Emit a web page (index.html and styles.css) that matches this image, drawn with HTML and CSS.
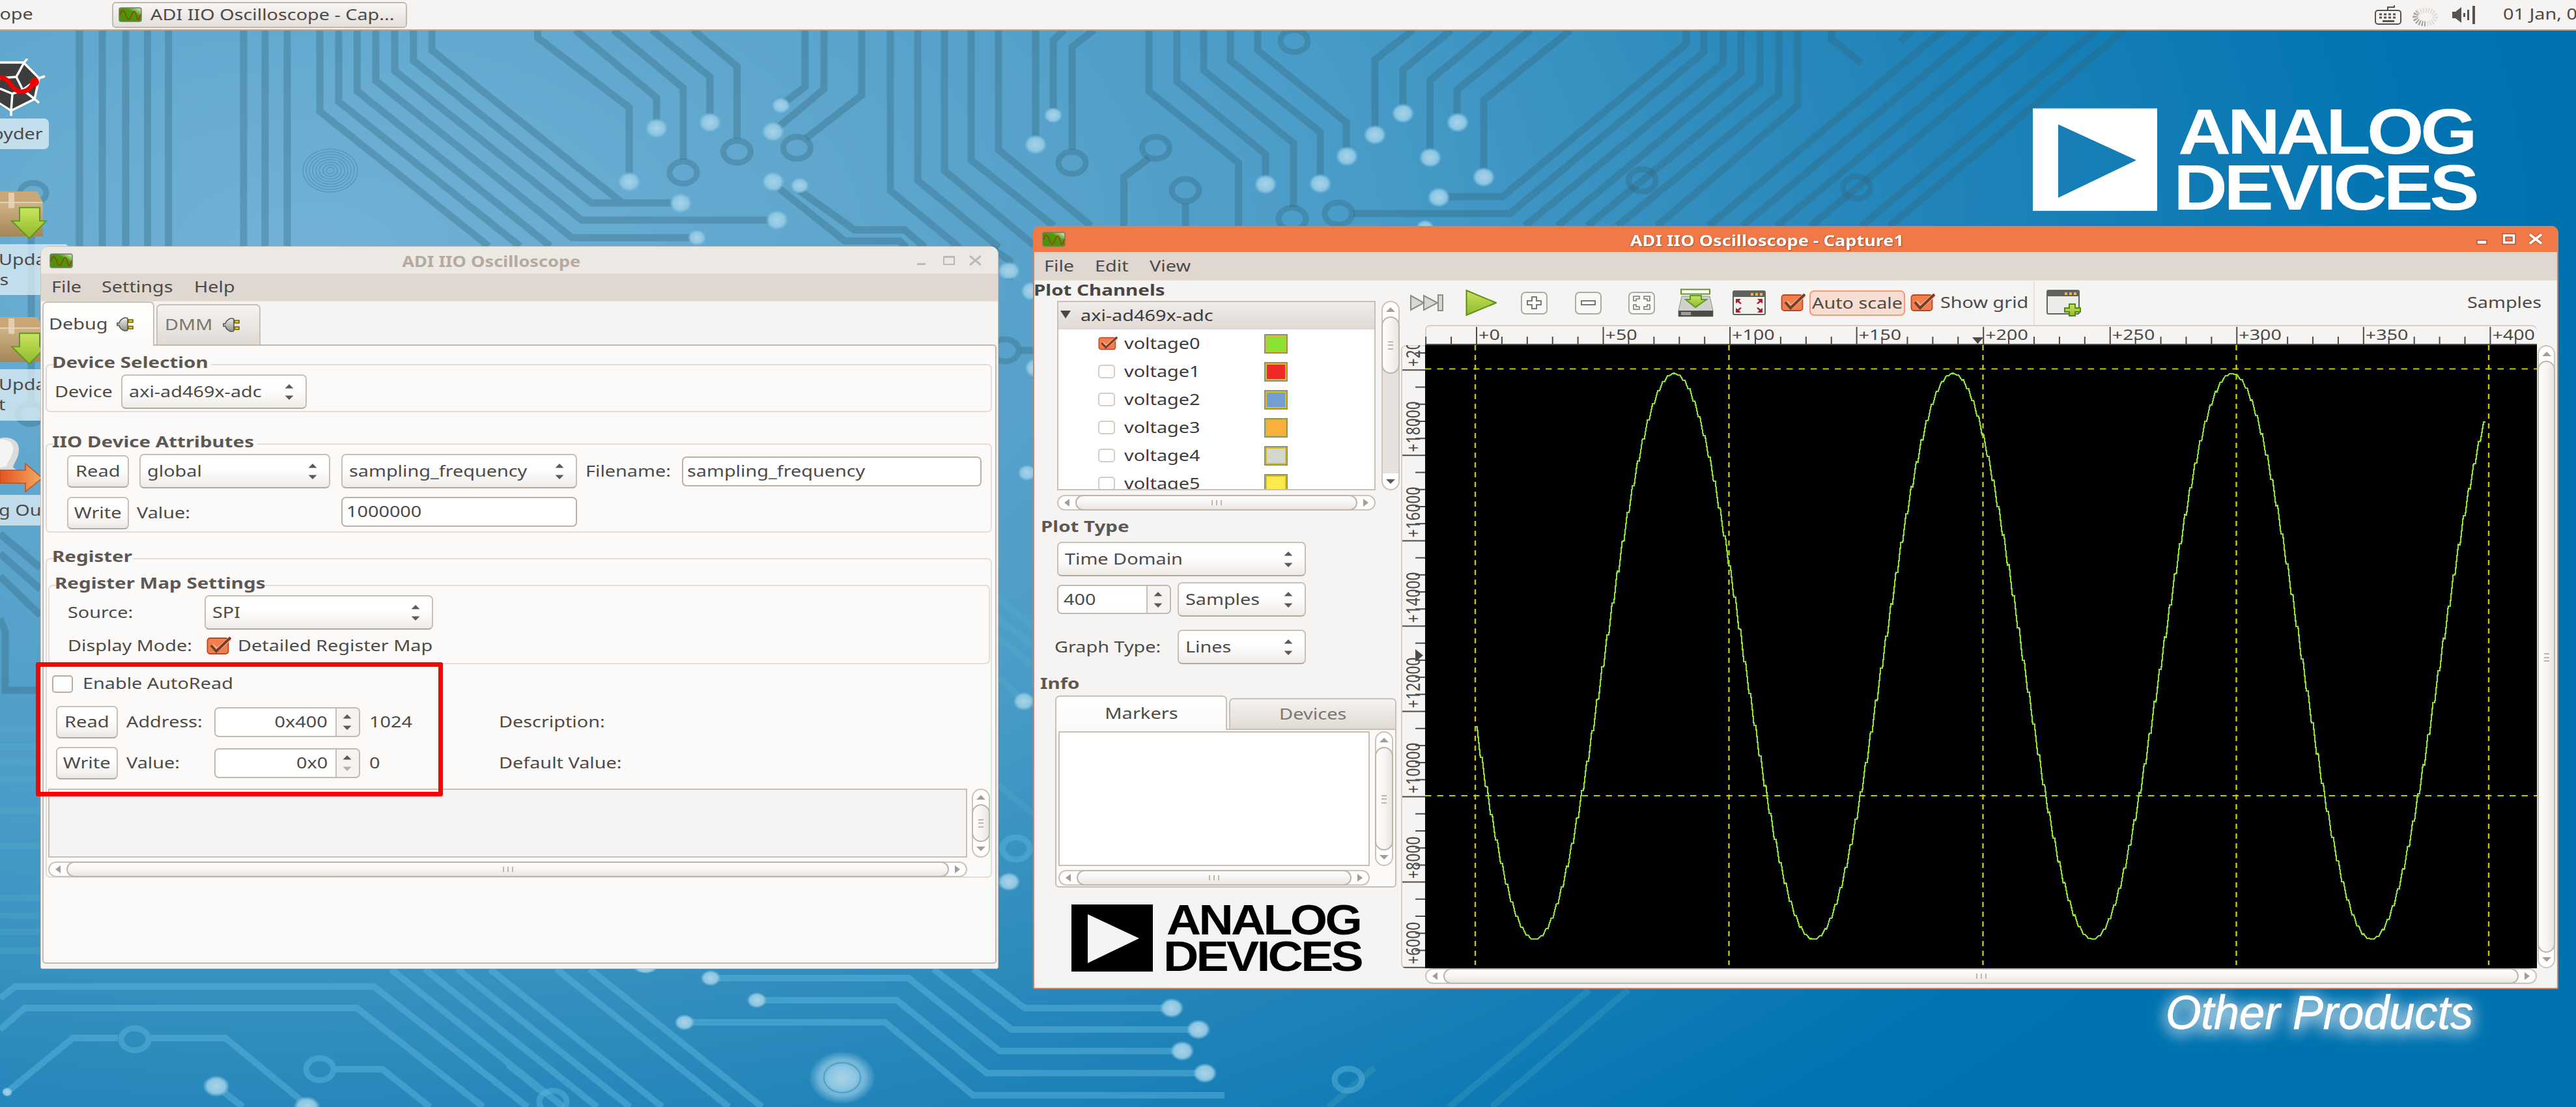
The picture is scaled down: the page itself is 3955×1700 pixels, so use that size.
FILE: index.html
```html
<!DOCTYPE html>
<html lang="en">
<head>
<meta charset="utf-8">
<title>ADI IIO Oscilloscope</title>
<link rel="stylesheet" href="styles.css">
</head>
<body>
<svg class="defs" width="0" height="0">
  <defs>
    <linearGradient id="gGreen" x1="0" y1="0" x2="0" y2="1"><stop offset="0" stop-color="#c9e45c"/><stop offset="1" stop-color="#8fb92f"/></linearGradient>
    <linearGradient id="gApp" x1="1" y1="0" x2="0" y2="1"><stop offset="0" stop-color="#e8f3e0"/><stop offset=".35" stop-color="#4e9a06"/><stop offset="1" stop-color="#4a8f08"/></linearGradient>
    <linearGradient id="gGrey" x1="0" y1="0" x2="0" y2="1"><stop offset="0" stop-color="#eeeeec"/><stop offset="1" stop-color="#8f918c"/></linearGradient>
    <linearGradient id="gBox" x1="0" y1="0" x2="0" y2="1"><stop offset="0" stop-color="#dcc298"/><stop offset="1" stop-color="#a58556"/></linearGradient>
    <linearGradient id="gExit" x1="0" y1="0" x2="1" y2="0"><stop offset="0" stop-color="#e2551f"/><stop offset="1" stop-color="#f4ab66"/></linearGradient>
    <radialGradient id="gNode"><stop offset="0" stop-color="#a9d3e8"/><stop offset=".7" stop-color="#8cc6e2"/><stop offset="1" stop-color="#7fc0e0" stop-opacity=".1"/></radialGradient>
  </defs>
  <symbol id="app" viewBox="0 0 36 23" preserveAspectRatio="none"><rect x="1" y="1" width="34" height="21" rx="3" fill="url(#gApp)" stroke="#6f7f66" stroke-width="1.5"/><path d="M2 12C5 3 8 3 11 12S17 21 20 12 26 6 28 15 32 18 34 11" fill="none" stroke="#8f4a10" stroke-width="1.8"/></symbol>
  <symbol id="plug" viewBox="0 0 28 24" preserveAspectRatio="none"><path d="M12 2H15Q17 2 17 4V20Q17 22 15 22H12Q5 19 4 14H1V10H4Q5 5 12 2Z" fill="url(#gGrey)" stroke="#555753" stroke-width="1.6"/><path d="M18 5H25V9H18ZM18 15H25V19H18Z" fill="#edd400" stroke="#6e5c00" stroke-width="1.6"/></symbol>
  <symbol id="check" viewBox="0 0 38 28" preserveAspectRatio="none"><rect x="1.5" y="2" width="32" height="24" rx="4" fill="#f47d4d" stroke="#b34a24" stroke-width="1.8"/><path d="M8 13L16 20 37 2" fill="none" stroke="#ffb08e" stroke-width="6"/><path d="M7 13L15 22 37 1" fill="none" stroke="#713f2b" stroke-width="4"/></symbol>
  <symbol id="updown" viewBox="0 0 14 26"><path d="M0 7L7 0 14 7ZM0 19L7 26 14 19Z" fill="#5b5855"/></symbol>
  <symbol id="updim" viewBox="0 0 14 26"><path d="M0 7L7 0 14 7Z" fill="#5b5855"/><path d="M0 19L7 26 14 19Z" fill="#b3afab"/></symbol>
  <symbol id="al" viewBox="0 0 8 12"><path d="M8 0V12L0 6Z" fill="#a39e99"/></symbol>
  <symbol id="ar" viewBox="0 0 8 12"><path d="M0 0V12L8 6Z" fill="#a39e99"/></symbol>
  <symbol id="au" viewBox="0 0 14 7"><path d="M0 7H14L7 0Z" fill="#a39e99"/></symbol>
  <symbol id="ad" viewBox="0 0 14 7"><path d="M0 0H14L7 7Z" fill="#a39e99"/></symbol>
  <symbol id="add" viewBox="0 0 14 7"><path d="M0 0H14L7 7Z" fill="#5b5855"/></symbol>
  <symbol id="package" viewBox="0 0 74 74" preserveAspectRatio="none">
    <path d="M0 0H57L66 18V70H0Z" fill="url(#gBox)"/><path d="M0 0H57L66 17H0Z" fill="#c9a777"/><path d="M0 17H65" stroke="#ecdcc0" stroke-width="1.5"/><path d="M13 2H22V26H13Z" fill="#e8d8be" opacity=".8"/>
    <path d="M30 25H61V46H71L45 73 18 46H30Z" fill="url(#gGreen)" stroke="#5e9a1c" stroke-width="2"/>
  </symbol>
</svg>

<main class="desktop">
  <svg class="wallpaper" viewBox="0 0 3955 1700">
    <g class="dark">
      <path d="M122 46V378M157 46V378M193 46V378M226.500 46V378M258.700 46V378M374 46V378M407 46V378M441 46V378"/>
      <path d="M491 46V171L750 378M520 46V156L798 378M548.500 46V140L845 378M577 46V124L878 365H1070M606 46V108.600L893 338H1193M634.700 46V93L908 311.700H1044M663 46V77L893 262 955 311"/>
      <path d="M825.500 46V58L966 165V279M883 46L1008 150V197M942 46L1049 135V245M1001 46L1090 118V188M1064 46L1131.600 102V213"/>
      <path d="M1236 46V133L1199 162M1265 46V137L1187 202M1323 46V146L1238 212"/>
      <path d="M1367 46V293L1473 380M1409 46V277L1534 380M1450 46V262L1588 377M1491 46V246L1618 347M1533 46V230L1675 347"/>
      <path d="M1590 46V221M1634 46L1617 62V176M1680 46L1646 72V230M1764 243L1725.500 272V347M1820 312V347"/>
      <path d="M1764 46V140L1901.600 250V347M1807 46V125L1943 237V283M1848 46V108L1986 220V318M1889 46V93L2027 203V282M1931 46V77L2067 188V240"/>
      <path d="M2169 46L2111 92V207M2228 46L2154 107V174M2289 46L2195.500 123V242M2350 46L2237 138V188M2411 46L2278 154V272"/>
      <path d="M2589 46V67L2307 302H2209M2616 46V80L2318 328H2078M2645.500 46V97L2341 347M2673 46V112L2391 347M2702 46V128L2437 347M2731 46V145L2483 347M2760 46V162L2544 347M2812 46V60L2858 97"/>
      <path d="M2984 46L2623 347M3037 46L2675 347M3091 46L2728 347M3143 46L2780 347M3219 46L2858 347M3262 46L2901 347M2935 46L2918 64"/>
      <path d="M1197 290L1297 370H1381L1392 380M1228 293L1312 353H1389L1420 380M48 315V616M1520 380L1550 400V430M1586 538H1567"/>
      <path d="M0 820L62 872M0 850L62 905M0 885L62 945M0 950L8 970V1060H62"/>
    </g>
    <g class="rings dark">
      <ellipse cx="51" cy="296" rx="20" ry="15"/><ellipse cx="47" cy="636" rx="20" ry="15"/><ellipse cx="1049" cy="265" rx="21" ry="17"/><ellipse cx="1131.600" cy="233" rx="21" ry="17"/><ellipse cx="1223.500" cy="227" rx="21" ry="17"/>
      <ellipse cx="1646" cy="250" rx="21" ry="17"/><ellipse cx="1774.500" cy="227" rx="21" ry="17"/><ellipse cx="1820" cy="292" rx="21" ry="17"/><ellipse cx="1987" cy="63" rx="21" ry="17"/><ellipse cx="1984" cy="336" rx="21" ry="17"/><ellipse cx="2055" cy="328" rx="21" ry="17"/>
      <ellipse cx="2521.500" cy="277" rx="21" ry="17"/><ellipse cx="2850.600" cy="288" rx="21" ry="17"/><ellipse cx="1543" cy="538" rx="21" ry="17"/>
    </g>
    <g class="ripple">
      <ellipse cx="507" cy="262" rx="42" ry="33"/><ellipse cx="507" cy="262" rx="37" ry="29"/><ellipse cx="507" cy="262" rx="32" ry="25"/><ellipse cx="507" cy="262" rx="27" ry="21"/><ellipse cx="507" cy="262" rx="22" ry="17"/><ellipse cx="507" cy="262" rx="17" ry="13"/><ellipse cx="507" cy="262" rx="11" ry="9"/><ellipse cx="507" cy="262" rx="6" ry="5"/>
    </g>
    <g class="light">
      <path class="faint" d="M0 1120H62M0 1147H62M0 1170H62M0 1196H62M0 1245H62M0 1299H62M0 1379H62M0 1406H62M0 1431H62M0 1460H62"/>
      <path d="M0 1533L23 1515H574L810 1700M0 1581L38 1548H548L742 1700M11 1677L112 1594H181M232 1594H346L471 1697M332 1668L373 1700M516 1642H587L660 1700"/>
      <path d="M600 1488L865 1700M652 1488L917 1700M702 1488L967 1700M752 1488L1017 1700M854 1488L1119 1700M905 1488L1170 1700M780 1635L835 1679"/>
      <path d="M1091 1502H1395L1535 1614H1815M1162 1536H1377L1515 1648H1850M1051 1570H1359L1494 1682H1880M1433 1488L1553 1581H1840M1494 1488L1573 1548H1799"/>
      <path class="faint" d="M1533 920L1586 962M1533 950L1586 992M1533 980L1586 1022M1533 1040L1572 1077M1533 1205L1586 1250M2500 1520L2290 1700M2440 1520L2225 1700M2110 1640L2040 1700"/>
    </g>
    <g class="light rings">
      <ellipse cx="207" cy="1596" rx="21" ry="17"/><ellipse cx="491" cy="1642" rx="21" ry="17"/><ellipse cx="849" cy="1692" rx="21" ry="17"/><ellipse cx="1560" cy="1303" rx="21" ry="17"/><ellipse cx="2070" cy="1658" rx="21" ry="17"/>
    </g>
    <g fill="url(#gNode)">
      <ellipse cx="966" cy="279" rx="17" ry="15"/><ellipse cx="1008" cy="197" rx="17" ry="15"/><ellipse cx="1090" cy="188" rx="17" ry="15"/><ellipse cx="1199" cy="162" rx="14" ry="12"/><ellipse cx="1187" cy="202" rx="17" ry="15"/><ellipse cx="1187" cy="279" rx="17" ry="15"/><ellipse cx="1228" cy="285" rx="14" ry="12"/><ellipse cx="1045" cy="312" rx="17" ry="15"/><ellipse cx="1193" cy="338" rx="17" ry="15"/><ellipse cx="1070" cy="365" rx="14" ry="12"/>
      <ellipse cx="1590" cy="222" rx="17" ry="15"/><ellipse cx="1617" cy="177" rx="14" ry="12"/><ellipse cx="1943" cy="283" rx="17" ry="15"/><ellipse cx="2027" cy="282" rx="17" ry="15"/><ellipse cx="2068" cy="240" rx="17" ry="15"/><ellipse cx="2111" cy="207" rx="17" ry="15"/><ellipse cx="2154" cy="174" rx="17" ry="15"/><ellipse cx="2196" cy="242" rx="17" ry="15"/><ellipse cx="2238" cy="188" rx="17" ry="15"/><ellipse cx="2278" cy="272" rx="17" ry="15"/><ellipse cx="2209" cy="303" rx="17" ry="15"/><ellipse cx="2188" cy="350" rx="14" ry="12"/>
      <ellipse cx="1549" cy="416" rx="17" ry="14"/><ellipse cx="1582" cy="447" rx="14" ry="14"/><ellipse cx="1588" cy="565" rx="14" ry="14"/><ellipse cx="1577" cy="726" rx="14" ry="12"/><ellipse cx="1572" cy="1077" rx="16" ry="14"/><ellipse cx="1549" cy="1354" rx="17" ry="14"/>
      <ellipse cx="11" cy="1677" rx="8" ry="7"/><ellipse cx="332" cy="1668" rx="20" ry="16"/><ellipse cx="471" cy="1700" rx="20" ry="16"/><ellipse cx="991" cy="1486" rx="18" ry="9"/><ellipse cx="1091" cy="1502" rx="15" ry="12"/><ellipse cx="1162" cy="1536" rx="15" ry="12"/><ellipse cx="1051" cy="1570" rx="15" ry="12"/><ellipse cx="1293" cy="1655" rx="50" ry="40" opacity=".75"/><ellipse cx="1293" cy="1655" rx="30" ry="24"/>
      <ellipse cx="1799" cy="1548" rx="18" ry="15"/><ellipse cx="1840" cy="1581" rx="18" ry="15"/><ellipse cx="1815" cy="1614" rx="18" ry="15"/><ellipse cx="1850" cy="1648" rx="18" ry="15"/>
    </g>
    <ellipse cx="1293" cy="1655" rx="28" ry="23" fill="none" stroke="#4d9fca" stroke-width="2"/>
    <path d="M3121 166.500H3312V323.700H3121ZM3160 191V303.700L3280 246Z" fill="#fff" fill-rule="evenodd"/>
    <g class="brand" fill="#fff" font-size="98">
      <text x="3344" y="236" textLength="454" lengthAdjust="spacingAndGlyphs">ANALOG</text>
      <text x="3337" y="321.500" textLength="464" lengthAdjust="spacingAndGlyphs">DEVICES</text>
    </g>
    <text class="other" x="3325" y="1580" textLength="472" lengthAdjust="spacingAndGlyphs">Other Products</text>
  </svg>

  <header class="panel">
    <span class="cutoff"><span class="t end">ope</span></span>
    <div class="task"><svg class="app"><use href="#app"/></svg><span class="t">ADI IIO Oscilloscope - Cap...</span></div>
    <div class="tray">
      <svg class="kbd" viewBox="0 0 42 30" preserveAspectRatio="none" fill="none" stroke="#555250" stroke-width="2"><path d="M20 7V3H30V0"/><rect x="1" y="8" width="39" height="21" rx="4"/><path d="M7 14H35M7 19H35" stroke-width="3" stroke-dasharray="4 3"/><path d="M12 24.500H30" stroke-width="3"/></svg>
      <svg class="spin" viewBox="0 0 42 30" preserveAspectRatio="none"><ellipse cx="21" cy="15" rx="15" ry="10.500" fill="none" stroke="#dedbd8" stroke-width="8" stroke-dasharray="2 2"/><path d="M21 25.500A15 10.500 0 0 1 9 8" fill="none" stroke="#a5a19d" stroke-width="8" stroke-dasharray="2 2"/></svg>
      <svg class="vol" viewBox="0 0 36 28" preserveAspectRatio="none" fill="#555250"><path d="M0 9H5L14 2V26L5 19H0ZM17 11H20V17H17ZM23 6H26V22H23ZM31 0H35V28H31Z"/></svg>
      <span class="t date">01 Jan, 0</span>
    </div>
  </header>

  <svg class="ico spyder" viewBox="0 0 70 88" preserveAspectRatio="none"><path d="M0 5H36L60 28 52 63 17 82 0 72Z" fill="#3d3d3d"/><path d="M-2 6H36L60 30 53 62 17 80 -2 68M37 6L25 28 0 30M25 28L35 48 60 30M35 48L53 62M19 54L17 80M19 54L0 46M19 54L35 48M37 6L42 0M60 30L69 27M53 62L60 68M17 80V88" fill="none" stroke="#fff" stroke-width="3.500"/><path d="M0 30C14 26 18 52 34 51 44 50 48 42 54 34" fill="none" stroke="#e00" stroke-width="7"/><ellipse cx="53" cy="36" rx="7" ry="7" fill="#e00"/></svg>
  <span class="dlabel l1"><span class="t end">pyder</span></span>
  <svg class="ico pk1"><use href="#package"/></svg>
  <span class="dlabel l2"><span class="t">Upda</span><span class="t">&nbsp;s</span></span>
  <svg class="ico pk2"><use href="#package"/></svg>
  <span class="dlabel l3"><span class="t">Upda</span><span class="t">t</span></span>
  <svg class="ico exit" viewBox="0 0 66 86" preserveAspectRatio="none"><path d="M0 1C12-2 29 2 29 18 29 32 22 36 20 46 28 52 40 54 42 62H0Z" fill="#dcdcda"/><path d="M0 3C9 2 22 6 20 20 18 32 12 36 10 44L0 46Z" fill="#f4f4f3"/><path d="M0 50H39V40L65 62 39 83V70H0Z" fill="url(#gExit)" stroke="#c34e1c" stroke-width="1.500"/></svg>
  <span class="dlabel l4"><span class="t">g Out</span></span>

  <section class="win main">
    <div class="title"><svg class="app"><use href="#app"/></svg><b class="t mid">ADI IIO Oscilloscope</b>
      <svg class="ctl" viewBox="0 0 100 18" preserveAspectRatio="none"><path d="M0 13H13V16H0ZM40 2V16H58V2ZM42 5H56V14H42Z" fill="#bdb9b6" fill-rule="evenodd"/><path d="M81 2L98 16M98 2L81 16" stroke="#bdb9b6" stroke-width="3"/></svg></div>
    <nav class="menu"><span class="t">File</span><span class="t">Settings</span><span class="t">Help</span></nav>
    <div class="tabs"><div class="tab on"><span class="t">Debug</span><svg><use href="#plug"/></svg></div><div class="tab"><span class="t">DMM</span><svg><use href="#plug"/></svg></div></div>
    <div class="page">
      <fieldset class="g1"><legend><b class="t">Device Selection</b></legend>
        <div class="row dev"><span class="t">Device</span><div class="select"><span class="t">axi-ad469x-adc</span><svg><use href="#updown"/></svg></div></div>
      </fieldset>
      <fieldset class="g2"><legend><b class="t">IIO Device Attributes</b></legend>
        <div class="row attr"><button><span class="t c">Read</span></button><div class="select s1"><span class="t">global</span><svg><use href="#updown"/></svg></div><div class="select s2"><span class="t">sampling_frequency</span><svg><use href="#updown"/></svg></div><span class="t">Filename:</span><div class="entry"><span class="t">sampling_frequency</span></div></div>
        <div class="row attr two"><button><span class="t c">Write</span></button><span class="t val">Value:</span><div class="entry e2"><span class="t">1000000</span></div></div>
      </fieldset>
      <fieldset class="g3"><legend><b class="t">Register</b></legend>
        <fieldset class="g4"><legend><b class="t">Register Map Settings</b></legend>
          <div class="row src"><span class="t">Source:</span><div class="select"><span class="t">SPI</span><svg><use href="#updown"/></svg></div></div>
          <div class="row mode"><span class="t">Display Mode:</span><svg class="chk"><use href="#check"/></svg><span class="t">Detailed Register Map</span></div>
        </fieldset>
        <div class="row auto"><i class="cb"></i><span class="t">Enable AutoRead</span></div>
        <div class="row reg r1"><button><span class="t c">Read</span></button><span class="t">Address:</span><div class="spinbox"><span class="t end">0x400</span><svg><use href="#updown"/></svg></div><span class="t">1024</span><span class="t">Description:</span></div>
        <div class="row reg r2"><button><span class="t c">Write</span></button><span class="t">Value:</span><div class="spinbox"><span class="t end">0x0</span><svg><use href="#updim"/></svg></div><span class="t">0</span><span class="t">Default Value:</span></div>
        <div class="row map"><div class="area"></div><div class="sb v"><svg><use href="#au"/></svg><i></i><svg><use href="#ad"/></svg></div></div>
        <div class="sb h mapx"><svg><use href="#al"/></svg><i></i><svg><use href="#ar"/></svg></div>
      </fieldset>
    </div>
  </section>

  <section class="win cap">
    <div class="title"><svg class="app"><use href="#app"/></svg><b class="t mid">ADI IIO Oscilloscope - Capture1</b>
      <svg class="ctl" viewBox="0 0 102 18" preserveAspectRatio="none"><g stroke="#b8522b" stroke-width="1.500" fill="#fff"><path d="M1 11H16V17H1ZM40 1V17H60V1ZM45 6H55V12H45Z" fill-rule="evenodd"/></g><path d="M82 2L100 16M100 2L82 16" stroke="#b8522b" stroke-width="6"/><path d="M82 2L100 16M100 2L82 16" stroke="#fff" stroke-width="4"/></svg></div>
    <nav class="menu"><span class="t">File</span><span class="t">Edit</span><span class="t">View</span></nav>
    <div class="body">
      <aside>
        <b class="t h1">Plot Channels</b>
        <div class="treebox">
          <div class="tree">
            <div class="thead"><svg viewBox="0 0 16 12" preserveAspectRatio="none"><path d="M0 0H16L8 12Z" fill="#4a4745"/></svg><span class="t">axi-ad469x-adc</span></div>
            <div class="trow"><svg class="tchk"><use href="#check"/></svg><span class="t">voltage0</span><i class="sw c0"></i></div>
            <div class="trow"><i class="tb"></i><span class="t">voltage1</span><i class="sw c1"></i></div>
            <div class="trow"><i class="tb"></i><span class="t">voltage2</span><i class="sw c2"></i></div>
            <div class="trow"><i class="tb"></i><span class="t">voltage3</span><i class="sw c3"></i></div>
            <div class="trow"><i class="tb"></i><span class="t">voltage4</span><i class="sw c4"></i></div>
            <div class="trow"><i class="tb"></i><span class="t">voltage5</span><i class="sw c5"></i></div>
          </div>
          <div class="sb v"><svg><use href="#au"/></svg><i></i><svg><use href="#add"/></svg></div>
        </div>
        <div class="sb h treex"><svg><use href="#al"/></svg><i></i><svg><use href="#ar"/></svg></div>
        <b class="t h2">Plot Type</b>
        <div class="select dom"><span class="t">Time Domain</span><svg><use href="#updown"/></svg></div>
        <div class="row cnt"><div class="spinbox"><span class="t">400</span><svg><use href="#updown"/></svg></div><div class="select"><span class="t">Samples</span><svg><use href="#updown"/></svg></div></div>
        <div class="row gt"><span class="t">Graph Type:</span><div class="select"><span class="t">Lines</span><svg><use href="#updown"/></svg></div></div>
        <b class="t h3">Info</b>
        <div class="nb">
          <div class="nbtabs"><div class="tab on"><span class="t c">Markers</span></div><div class="tab"><span class="t c">Devices</span></div></div>
          <div class="nbpage"><div class="nbrow"><div class="text"></div><div class="sb v"><svg><use href="#au"/></svg><i></i><svg><use href="#ad"/></svg></div></div>
          <div class="sb h nbx"><svg><use href="#al"/></svg><i></i><svg><use href="#ar"/></svg></div></div>
        </div>
        <svg class="logo brand" viewBox="0 0 450 104"><path d="M0 0H125V103H0ZM25 15V90L104 52Z" fill-rule="evenodd"/><text x="146" y="46" font-size="64" textLength="297" lengthAdjust="spacingAndGlyphs">ANALOG</text><text x="141" y="102" font-size="64" textLength="304" lengthAdjust="spacingAndGlyphs">DEVICES</text></svg>
      </aside>
      <div class="scope">
        <div class="tools">
          <svg width="51" height="26" viewBox="0 0 51 26" preserveAspectRatio="none" fill="#d6d9d3" stroke="#8b8e88" stroke-width="2"><path d="M1 2L21 13 1 24ZM21 2L42 13 21 24ZM43 1H50V25H43Z"/></svg>
          <svg width="48" height="42" viewBox="0 0 48 42" preserveAspectRatio="none"><path d="M1.500 2L47 21 1.500 40Z" fill="url(#gGreen)" stroke="#5c8f17" stroke-width="2"/></svg>
          <svg width="41" height="35" viewBox="0 0 41 35" preserveAspectRatio="none"><rect class="zb" x="1" y="1" width="39" height="33" rx="6"/><path d="M17 8H24V14H31V20H24V26H17V20H10V14H17Z" fill="#fff" stroke="#777a74" stroke-width="2"/></svg>
          <svg width="41" height="35" viewBox="0 0 41 35" preserveAspectRatio="none"><rect class="zb" x="1" y="1" width="39" height="33" rx="6"/><path d="M10 14H31V20H10Z" fill="#fff" stroke="#777a74" stroke-width="2"/></svg>
          <svg width="41" height="35" viewBox="0 0 41 35" preserveAspectRatio="none"><rect class="zb" x="1" y="1" width="39" height="33" rx="6"/><path d="M8 14V7H17V11H12V14ZM33 14V7H24V11H29V14ZM8 20V27H17V23H12V20ZM33 20V27H24V23H29V20Z" fill="#fff" stroke="#777a74" stroke-width="1.600"/></svg>
          <svg width="55" height="44" viewBox="0 0 55 44" preserveAspectRatio="none"><path d="M6 12H49L54 34V43H1V34Z" fill="#cfd1cd" stroke="#8b8e88"/><path d="M1 34H54V43H1Z" fill="#4a4c49"/><path d="M5 36H20V41H5Z" fill="#9b9d98"/><rect x="5" y="1.500" width="44" height="7" fill="#fff" stroke="#5f9a1d" stroke-width="2"/><path d="M19 11H36V17H44L27 29 12 17H19Z" fill="url(#gGreen)" stroke="#5f9a1d" stroke-width="2"/></svg>
          <svg width="51" height="38" viewBox="0 0 51 38" preserveAspectRatio="none"><rect x="1" y="1" width="49" height="36" rx="2" fill="#f1f1f0" stroke="#60625e" stroke-width="2"/><path d="M2 1H49V10H2Z" fill="#60625e"/><path d="M28 4H32V8H28ZM35 4H39V8H35ZM42 4H46V8H42Z" fill="#f0b14a"/><path d="M5 13H13L10 16 14 20 12 21 8 18 5 20ZM46 13H38L41 16 37 20 39 21 43 18 46 20ZM5 34H13L10 31 14 27 12 26 8 29 5 27ZM46 34H38L41 31 37 27 39 26 43 29 46 27Z" fill="#b31b2a"/></svg>
          <svg class="chk"><use href="#check"/></svg>
          <span class="focus"><span class="t">Auto scale</span></span>
          <svg class="chk"><use href="#check"/></svg>
          <span class="t">Show grid</span>
          <i class="sep"></i>
          <svg width="53" height="41" viewBox="0 0 53 41" preserveAspectRatio="none"><rect x="1" y="1" width="49" height="36" rx="2" fill="#ececeb" stroke="#60625e" stroke-width="2"/><path d="M2 1H49V10H2Z" fill="#60625e"/><path d="M28 4H32V8H28ZM35 4H39V8H35ZM42 4H46V8H42Z" fill="#f0b14a"/><path d="M35 22H44V28H52V34H44V40H35V34H28V28H35Z" fill="url(#gGreen)" stroke="#4e8a14" stroke-width="2"/></svg>
          <span class="t samples">Samples</span>
        </div>
        <div class="chart">
          <svg class="hr" id="hruler" viewBox="2188 499 1707 31"></svg>
          <svg class="vr" id="vruler" viewBox="2151 530 37 957"></svg>
          <svg class="plot" id="plot" viewBox="2188 530 1707 957"></svg>
          <div class="sb v"><svg><use href="#au"/></svg><i></i><svg><use href="#ad"/></svg></div>
          <div class="sb h"><svg><use href="#al"/></svg><i></i><svg><use href="#ar"/></svg></div>
        </div>
      </div>
    </div>
  </section>
  <div class="callout"></div>
</main>
<script src="scope.js"></script>
</body>
</html>
```
FILE: styles.css
```css
* { box-sizing: border-box; }
body { margin: 0; width: 3955px; height: 1700px; overflow: hidden; font: 24px/32px "Noto Sans", "Open Sans", sans-serif; color: #4d4a48; }
.defs { position: absolute; }
svg { display: block; flex: none; }

.t { display: inline-block; white-space: pre; transform: translate(-2px, -1.5px) scaleX(1.2); transform-origin: 0 50%; }
.t.c { transform: translateY(-1.5px) scaleX(1.21); transform-origin: 50% 50%; }
.t.end { transform: translate(1px, -1.5px) scaleX(1.2); transform-origin: 100% 50%; }
b.t { font-weight: 700; color: #5e5854; transform: translate(-2px, -1px) scaleX(1.23); }
b.t.mid { transform: scaleX(1.13); transform-origin: 50% 50%; }

.desktop { position: relative; width: 3955px; height: 1700px; overflow: hidden;
  background: radial-gradient(3400px 1900px at 480px 380px, #72b2d6 0, #5ca5cc 27%, #4a9cc8 47%, #3690c0 60%, #2385b9 72%, #0174b1 95%, #0072b0 100%); }
.wallpaper { position: absolute; inset: 0; width: 3955px; height: 1700px; }
.dark { fill: none; stroke: rgba(50, 100, 120, .33); stroke-width: 11; }
.light { fill: none; stroke: rgba(90, 180, 220, .5); stroke-width: 10; }
.light .faint { stroke: rgba(90, 180, 200, .22); }
.rings { stroke-width: 9; }
.ripple { fill: none; stroke: rgba(60, 130, 165, .45); stroke-width: 1.6; }
.brand text { font-family: "Liberation Sans", Arial, sans-serif; font-weight: 700; letter-spacing: -.05em; }
.other { font: italic 72px "Liberation Sans", Arial, sans-serif; fill: #fff; stroke: #fff; stroke-width: .8; text-shadow: 0 4px 22px rgba(255,255,255,.9), 0 4px 30px rgba(255,255,255,.6); }

.panel { position: relative; display: flex; align-items: center; height: 47px; background: #f5f4f2; border-bottom: 2px solid #b7a595; }
.cutoff { width: 50px; height: 38px; line-height: 36px; display: flex; justify-content: flex-end; }
.task { display: flex; align-items: center; gap: 15px; margin-left: 122px; width: 453px; height: 40px; padding: 0 8px; border: 2px solid #c4b7ab; border-radius: 6px; background: linear-gradient(#f8f7f6, #e4dfda); }
.app { width: 36px; height: 23px; }
.tray { display: flex; align-items: center; margin-left: auto; width: 309px; height: 45px; }
.kbd { width: 42px; height: 30px; }
.spin { width: 42px; height: 30px; margin: 6px 0 0 15px; }
.vol { width: 36px; height: 28px; margin-left: 20px; }
.date { margin-left: 44px; margin-top: -1px; }

.ico { position: absolute; left: 0; }
.spyder { top: 90px; width: 70px; height: 88px; }
.pk1 { top: 294px; width: 74px; height: 73px; }
.pk2 { top: 487px; width: 74px; height: 73px; }
.exit { top: 672px; width: 66px; height: 86px; }
.dlabel { position: absolute; left: -8px; display: flex; flex-direction: column; background: rgba(232,243,248,.72); border-radius: 7px; padding-left: 8px; line-height: 31px; }
.l1 { top: 182px; width: 83px; height: 47px; align-items: flex-end; padding: 8px 10px 0 0; }
.l2 { top: 375px; width: 114px; height: 78px; padding-top: 8px; }
.l3 { top: 567px; width: 114px; height: 79px; padding-top: 8px; }
.l4 { top: 760px; width: 114px; height: 47px; padding-top: 8px; }
.l2 .t + .t { margin-left: -6px; }

.win { position: absolute; display: flex; flex-direction: column; background: #f5f4f2; border-radius: 12px 12px 3px 3px; }
.title { display: grid; grid-template-columns: 36px 1fr 102px; align-items: center; border-radius: 11px 11px 0 0; }
.title b { justify-self: center; }
.menu { display: grid; align-items: center; height: 43px; background: #dfd7d0; border-bottom: 1px solid #e8dccd; }
.main { left: 62px; top: 378px; width: 1471px; height: 1110px; border: 1px solid #cfc4b9; }
.main .title { height: 41px; padding: 1px 24px 0 13px; background: #ece9e4; grid-template-columns: 36px 1fr 100px; }
.main .title b { color: #b7a99d; position: relative; left: -6px; top: 1px; }
.ctl { width: 100%; height: 18px; }
.main .menu { grid-template-columns: 77px 142px 100px; padding-left: 18px; }
.tabs { display: flex; align-items: flex-end; gap: 3px; height: 66px; padding-left: 2px; }
.tab { display: flex; align-items: center; height: 62px; width: 160px; padding: 0 12px 0 13px; border: 2px solid #cbc0b6; border-bottom: 0; border-radius: 7px 7px 0 0; background: linear-gradient(#f5f3f1, #e0dad5); color: #7b7672; }
.tab.on { position: relative; height: 68px; margin-bottom: -2px; width: 172px; padding: 0 12px 0 10px; background: linear-gradient(#fff, #fbfaf8); color: #4d4a48; z-index: 1; }
.tab svg { width: 28px; height: 24px; margin-left: auto; }
.tabs .tab svg { margin-right: 16px; }
.page { margin: 0 2px 7px; flex: 1; border: 2px solid #c4b9ae; border-radius: 0 5px 5px 5px; background: #fbfaf8; }

fieldset { min-inline-size: 0; margin: 0 0 0 3px; padding: 0; width: 1453px; border: 2px solid #e2ddd6; border-radius: 7px; }
legend { padding: 0; margin-left: 10px; height: 24px; line-height: 24px; }
legend .t { position: relative; top: -3px; }
.g1 { margin-top: 17px; height: 85px; }
.g2 { margin-top: 37px; height: 148px; }
.g3 { margin-top: 28px; height: 502px; }
.g4 { margin: 17px 0 0 2px; width: 1446px; height: 133px; }
.g1 legend { width: 242px; } .g2 legend { width: 313px; } .g3 > legend { width: 122px; } .g4 legend { width: 320px; }

.row { display: grid; align-items: center; }
.select { display: flex; align-items: center; justify-content: space-between; height: 53px; padding: 0 18px 0 12px; border: 2px solid #cabfb5; border-bottom-color: #b5a99e; border-radius: 7px; background: linear-gradient(#fff 40%, #f8f6f4 70%, #eeebe7); }
.select svg, .spinbox svg { width: 14px; height: 24px; }
button { width: 95px; height: 50px; padding: 0; font: inherit; color: inherit; border: 2px solid #cabfb5; border-bottom-color: #b5a99e; border-radius: 7px; background: linear-gradient(#fff 40%, #f8f6f4 70%, #ebe7e3); }
.entry { width: 460px; height: 46px; line-height: 42px; padding-left: 8px; border: 2px solid #bdb1a6; border-radius: 7px; background: #fff; }
.dev { grid-template-columns: 100px 285px; padding: 3px 0 0 14px; }
.attr { grid-template-columns: 111px 310px 377px 146px 460px; padding: 3px 0 0 31px; }
.attr .s1 { width: 293px; } .attr .s2 { width: 362px; }
.attr.two { grid-template-columns: 109px 312px 377px; padding-top: 13px; }
.attr .e2 { width: 362px; align-self: start; }
.src { grid-template-columns: 208px 351px; padding: 3px 0 0 30px; }
.mode { grid-template-columns: 211px 50px 300px; padding-left: 30px; height: 49px; }
.chk { width: 38px; height: 28px; }
.auto { grid-template-columns: 49px 400px; padding: 14px 0 0 8px; }
.cb { width: 32px; height: 27px; border: 2px solid #b9ada2; border-radius: 5px; background: #fff; }
.reg { grid-template-columns: 110px 133px 240px 199px 300px; padding-left: 14px; }
.reg.r1 { margin-top: 18px; } .reg.r2 { margin-top: 13px; }
.spinbox { display: grid; grid-template-columns: 1fr 36px; align-items: center; width: 224px; height: 46px; border: 2px solid #c4b9ae; border-radius: 7px; background: linear-gradient(90deg, #fff calc(100% - 36px), #cabfb5 calc(100% - 36px), #cabfb5 calc(100% - 34px), #f5f3f1 calc(100% - 34px)); }
.spinbox .end { justify-self: end; margin-right: 13px; }
.spinbox svg { justify-self: center; }
.map { grid-template-columns: 1411px 28px; gap: 7px; padding: 14px 0 0 2px; }
.area { height: 106px; border: 2px solid #cabfb5; background: #f5f4f2; }

.sb { display: flex; align-items: center; border: 2px solid #cdc3b9; border-radius: 14px; background: #fff; }
.sb i { position: relative; flex: 1; border: 2px solid #bfb4a9; border-radius: 14px; }
.sb i::after { content: ""; position: absolute; left: 50%; top: 50%; }
.sb.h { height: 24px; padding: 0 9px; }
.sb.h i { height: 24px; margin: 0 9px; background: linear-gradient(#fdfdfc, #f7f5f3 50%, #e9e5e1); }
.sb.h i::after { width: 16px; height: 8px; margin: -4px 0 0 -8px; background: repeating-linear-gradient(90deg, #bfb6ae 0 2px, transparent 2px 7px); }
.sb.h svg { width: 8px; height: 12px; }
.sb.v { flex-direction: column; width: 28px; padding: 8px 0; }
.sb.v i { width: 28px; margin: 7px 0; background: linear-gradient(90deg, #fdfdfc, #f7f5f3 50%, #e9e5e1); }
.sb.v i::after { width: 8px; height: 13px; margin: -6px 0 0 -4px; background: repeating-linear-gradient(#bfb6ae 0 2px, transparent 2px 5.5px); }
.sb.v svg { width: 14px; height: 7px; }
.map .sb { height: 106px; }
.mapx { width: 1411px; margin: 6px 0 0 2px; }

.callout { position: absolute; left: 55px; top: 1017px; width: 625px; height: 206px; border: 7px solid #f00; border-radius: 3px; }

.cap { left: 1586px; top: 347px; width: 2342px; height: 1172px; border: 2px solid #dd7d55; border-top: 0; }
.cap .title { height: 40px; margin: 0 -2px; padding: 0 24px 0 14px; background: #f17947; }
.cap .title b { color: #fff; position: relative; left: -6px; top: 2px; text-shadow: 1px 1px 1px #a04a25, -1px 0 1px #b8572f; }
.cap .menu { grid-template-columns: 78px 84px 100px; padding-left: 17px; height: 44px; }
.body { display: flex; flex: 1; }
aside { display: flex; flex-direction: column; align-items: flex-start; width: 563px; }
aside .h1 { height: 33px; line-height: 33px; margin-left: 1px; margin-top: -2px; color: #4a4644; }
aside .h2 { height: 48px; line-height: 49px; margin-left: 12px; }
aside .h3 { height: 48px; line-height: 33px; padding-top: 13px; margin-left: 11px; }
.treebox { display: flex; gap: 9px; margin-left: 35px; height: 291px; }
.tree { width: 489px; border: 2px solid #cabfb5; background: #fff; overflow: hidden; color: #3d3a38; }
.thead { display: grid; grid-template-columns: 33px 1fr; align-items: center; height: 42px; padding-left: 3px; background: linear-gradient(#efecea, #e0dad6); }
.thead svg { width: 16px; height: 12px; margin-top: -4px; }
.trow { display: grid; grid-template-columns: 42px 213px 40px; align-items: center; height: 43px; padding-left: 61px; }
.tchk { width: 30px; height: 21px; }
.tb { width: 26px; height: 21px; border: 2px solid #d5cdc4; border-radius: 5px; }
.sw { width: 36px; height: 30px; border: 2px solid #8a9474; box-shadow: inset 0 0 0 2px #d8bd28; }
.c0 { background: #8ae234; } .c1 { background: #ef2929; } .c2 { background: #729fcf; } .c3 { background: #fcaf3e; } .c4 { background: #d3d7cf; } .c5 { background: #fce94f; }
.treebox .sb.v { background: linear-gradient(#fff 92px, #e6e1dc 92px calc(100% - 24px), #fff calc(100% - 24px)); }
.treebox .sb.v i { flex: 0 0 88px; margin: 7px 0 auto; }
.treex { width: 489px; margin: 7px 0 0 35px; }
.dom { width: 382px; margin-left: 35px; }
.cnt { grid-template-columns: 185px 197px; margin: 9px 0 0 35px; }
.cnt .spinbox { width: 175px; height: 45px; padding-left: 10px; }
.gt { grid-template-columns: 187px 197px; margin: 20px 0 0 33px; }
.nb { width: 524px; margin-left: 32px; height: 294px; }
.nbtabs { display: flex; align-items: flex-end; gap: 3px; height: 51px; }
.nbtabs .tab { width: 257px; height: 47px; padding: 0; justify-content: center; }
.nbtabs .tab.on { width: 264px; height: 53px; }
.nbpage { height: 244px; padding: 2px 3px; border: 2px solid #cabfb5; border-radius: 0 0 6px 6px; background: #fbfaf8; }
.nbrow { display: flex; gap: 8px; }
.text { width: 478px; height: 207px; border: 2px solid #cabfb5; background: #fff; }
.nbx { width: 478px; margin-top: 6px; }
.logo { width: 450px; height: 104px; margin: 27px 0 0 57px; }

.scope { flex: 1; }
.tools { display: grid; grid-template-columns: 85px 85px 83px 82px 76px 84px 74px 44px 155px 48px 141px 20px 1fr 114px; align-items: center; height: 68px; padding: 0 22px 0 14px; }
.zb { fill: #f8f8f7; stroke: #a9aba6; stroke-width: 2; }
.focus { width: 147px; height: 39px; line-height: 35px; padding-left: 4px; border: 2px solid #f59a75; border-radius: 7px; background: #f7ddd2; }
.sep { width: 2px; height: 66px; background: #e6e1dc; }
.chart { display: grid; grid-template: 31px 957px 24px / 37px 1707px 28px; }
.hr { grid-area: 1 / 2; width: 1707px; height: 31px; border-radius: 8px 8px 0 0; box-shadow: inset 0 2px 0 #d8d0c8, inset 2px 0 0 #d8d0c8; }
.vr { grid-area: 2 / 1; width: 37px; height: 957px; border-radius: 8px 0 0 8px; box-shadow: inset 2px 0 0 #d8d0c8, inset 0 2px 0 #e2dcd5; }
.plot { grid-area: 2 / 2; width: 1707px; height: 957px; background: #000; }
.chart .sb.v { grid-area: 2 / 3; margin-left: 1px; width: 27px; }
.chart .sb.v i { width: 27px; }
.chart .sb.h { grid-area: 3 / 2; }
.tick { stroke: #4d4a48; stroke-width: 2; }
.num { font-size: 22px; fill: #4d4a48; }
.wave { fill: none; stroke: #8ae234; stroke-width: 2.2; shape-rendering: crispEdges; }
.gv { stroke: #c8c800; stroke-width: 2.4; stroke-dasharray: 8 7; }
.gh { stroke: #c8c800; stroke-width: 2; stroke-dasharray: 9.5 9; }
```
FILE: scope.js
```javascript
const NS = "http://www.w3.org/2000/svg";

function add(parent, tag, attrs, text) {
  const el = document.createElementNS(NS, tag);
  for (const key in attrs) el.setAttribute(key, attrs[key]);
  if (text) el.textContent = text;
  parent.appendChild(el);
  return el;
}

// horizontal ruler: one major tick every 50 samples, four minors between
const hr = document.getElementById("hruler");
const x0 = 2267, stepX = 194.55;
for (let i = -2; i <= 41; i++) {
  const x = x0 + i * stepX / 5;
  const major = i >= 0 && i % 5 === 0;
  add(hr, "path", { class: "tick", d: `M${x} ${major ? 502 : 517}V529` });
  if (major) {
    const label = "+" + i * 10;
    add(hr, "text", { class: "num", x: x + 3, y: 521.5, textLength: label.length * 16.4, lengthAdjust: "spacingAndGlyphs" }, label);
  }
}
add(hr, "path", { class: "tick", d: "M2188 529H3895" });
add(hr, "path", { d: "M3028 518H3045L3036.5 528Z", fill: "#4d4a48" });

// vertical ruler: one major tick every 2000 codes
const vr = document.getElementById("vruler");
for (let i = -1; i <= 35; i++) {
  const y = 568.3 + i * 26.21;
  const major = i >= 0 && i % 5 === 0;
  add(vr, "path", { class: "tick", d: `M${major ? 2153 : 2173} ${y}H2188` });
  if (major) {
    const label = "+" + (20000 - i / 5 * 2000);
    add(vr, "text", {
      class: "num", transform: `translate(2180 ${y - 5}) rotate(-90) scale(1 1.3)`,
      textLength: label.length * 13, lengthAdjust: "spacingAndGlyphs"
    }, label);
  }
}
add(vr, "path", { d: "M2173 997V1016L2185 1006.5Z", fill: "#4d4a48" });

// plot grid and waveform
const plot = document.getElementById("plot");
for (const x of [2265, 2654.5, 3044.5, 3433.5, 3821]) add(plot, "path", { class: "gv", d: `M${x} 530V1482` });
for (const y of [566.5, 1222]) add(plot, "path", { class: "gh", d: `M2188 ${y}H3895` });

const level = x => 1008 + 434.5 * Math.cos(2 * Math.PI * (x - 2355) / 428.2);
let d = "";
for (let x = 2265; x < 3814; x += 7.78) {
  const y = level(x).toFixed(1);
  d += `${d ? "L" : "M"}${x.toFixed(1)} ${y}H${(x + 2.8).toFixed(1)}`;
}
add(plot, "path", { class: "wave", d });
```
